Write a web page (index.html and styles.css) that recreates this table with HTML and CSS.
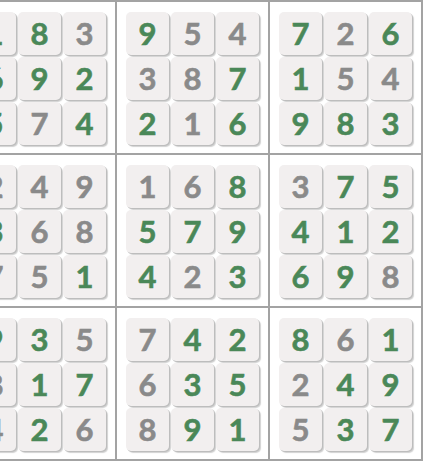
FILE: index.html
```html
<!DOCTYPE html>
<html>
<head>
<meta charset="utf-8">
<link rel="stylesheet" href="styles.css">
</head>
<body>
<div class="board">
  <div class="box">
    <div class="c g">1</div><div class="c g">8</div><div class="c k">3</div>
    <div class="c g">6</div><div class="c g">9</div><div class="c g">2</div>
    <div class="c g">5</div><div class="c k">7</div><div class="c g">4</div>
  </div>
  <div class="box">
    <div class="c g">9</div><div class="c k">5</div><div class="c k">4</div>
    <div class="c k">3</div><div class="c k">8</div><div class="c g">7</div>
    <div class="c g">2</div><div class="c k">1</div><div class="c g">6</div>
  </div>
  <div class="box">
    <div class="c g">7</div><div class="c k">2</div><div class="c g">6</div>
    <div class="c g">1</div><div class="c k">5</div><div class="c k">4</div>
    <div class="c g">9</div><div class="c g">8</div><div class="c g">3</div>
  </div>
  <div class="box">
    <div class="c k">2</div><div class="c k">4</div><div class="c k">9</div>
    <div class="c g">3</div><div class="c k">6</div><div class="c k">8</div>
    <div class="c k">7</div><div class="c k">5</div><div class="c g">1</div>
  </div>
  <div class="box">
    <div class="c k">1</div><div class="c k">6</div><div class="c g">8</div>
    <div class="c g">5</div><div class="c g">7</div><div class="c g">9</div>
    <div class="c g">4</div><div class="c k">2</div><div class="c g">3</div>
  </div>
  <div class="box">
    <div class="c k">3</div><div class="c g">7</div><div class="c g">5</div>
    <div class="c g">4</div><div class="c g">1</div><div class="c g">2</div>
    <div class="c g">6</div><div class="c g">9</div><div class="c k">8</div>
  </div>
  <div class="box">
    <div class="c g">9</div><div class="c g">3</div><div class="c k">5</div>
    <div class="c k">8</div><div class="c g">1</div><div class="c g">7</div>
    <div class="c k">4</div><div class="c g">2</div><div class="c k">6</div>
  </div>
  <div class="box">
    <div class="c k">7</div><div class="c g">4</div><div class="c g">2</div>
    <div class="c k">6</div><div class="c g">3</div><div class="c g">5</div>
    <div class="c k">8</div><div class="c g">9</div><div class="c g">1</div>
  </div>
  <div class="box">
    <div class="c g">8</div><div class="c k">6</div><div class="c g">1</div>
    <div class="c k">2</div><div class="c g">4</div><div class="c g">9</div>
    <div class="c k">5</div><div class="c g">3</div><div class="c g">7</div>
  </div>
</div>
</body>
</html>
```
FILE: styles.css
```css
html, body {
  margin: 0;
  padding: 0;
  background: #ffffff;
  overflow: hidden;
}
.board {
  display: grid;
  grid-template-columns: repeat(3, 151px);
  grid-template-rows: repeat(3, 151px);
  gap: 2px;
  padding: 2px;
  background: #a3a3a3;
  width: max-content;
  margin-left: -38px;
}
.box {
  background: #ffffff;
  display: grid;
  grid-template-columns: repeat(3, 43px);
  grid-template-rows: repeat(3, 43px);
  gap: 2px;
  padding: 10px 9px 8px 9px;
}
.c {
  background: #f2efef;
  border-radius: 5px;
  box-shadow: 1px 1px 0 #bdbdbd, 2px 2px 1px #d2d2d2;
  display: flex;
  align-items: center;
  justify-content: center;
  font-family: Lato, "Liberation Sans", sans-serif;
  font-weight: 700;
  font-size: 31px;
  line-height: 1;
  -webkit-text-stroke: 0.6px currentColor;
}
.g { color: #4a8858; }
.k { color: #8a8a8a; }
```
